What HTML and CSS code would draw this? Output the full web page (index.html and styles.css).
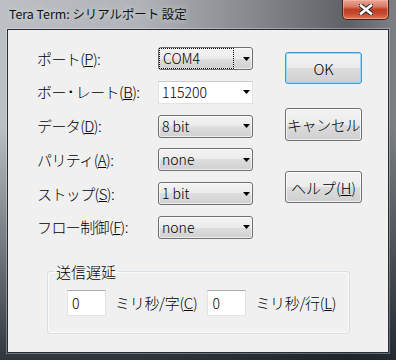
FILE: index.html
```html
<!DOCTYPE html>
<html lang="ja">
<head>
    <meta charset="UTF-8">
    <title>Tera Term: シリアルポート 設定</title>
    <link rel="stylesheet" href="styles.css">
</head>
<body>
    <div class="window">
        <div class="titlebar">
            <span class="title">Tera Term: シリアルポート 設定</span>
            <button class="close" title="閉じる">
                <svg width="14" height="11" viewBox="0 0 14 11">
                    <path d="M2 1.5 L12 9.5 M12 1.5 L2 9.5" stroke="#2a2a2a" stroke-width="4.6" stroke-linecap="square"/>
                    <path d="M2 1.5 L12 9.5 M12 1.5 L2 9.5" stroke="#ffffff" stroke-width="2.6" stroke-linecap="square"/>
                </svg>
            </button>
        </div>

        <div class="client">
            <div class="top">
                <div class="fields">
                    <label>ポート(<u>P</u>):</label>
                    <div class="combo">
                        <span class="value focus">COM4</span>
                        <svg class="arrow" width="7" height="4" viewBox="0 0 7 4"><path d="M0 0 H7 L3.5 4 Z" fill="#000"/></svg>
                    </div>

                    <label>ボー<span class="dot">・</span>レート(<u>B</u>):</label>
                    <div class="combo edit">
                        <span class="value">115200</span>
                        <svg class="arrow" width="7" height="4" viewBox="0 0 7 4"><path d="M0 0 H7 L3.5 4 Z" fill="#000"/></svg>
                    </div>

                    <label>データ(<u>D</u>):</label>
                    <div class="combo">
                        <span class="value">8 bit</span>
                        <svg class="arrow" width="7" height="4" viewBox="0 0 7 4"><path d="M0 0 H7 L3.5 4 Z" fill="#000"/></svg>
                    </div>

                    <label>パリティ(<u>A</u>):</label>
                    <div class="combo">
                        <span class="value">none</span>
                        <svg class="arrow" width="7" height="4" viewBox="0 0 7 4"><path d="M0 0 H7 L3.5 4 Z" fill="#000"/></svg>
                    </div>

                    <label>ストップ(<u>S</u>):</label>
                    <div class="combo">
                        <span class="value">1 bit</span>
                        <svg class="arrow" width="7" height="4" viewBox="0 0 7 4"><path d="M0 0 H7 L3.5 4 Z" fill="#000"/></svg>
                    </div>

                    <label>フロー制御(<u>F</u>):</label>
                    <div class="combo">
                        <span class="value">none</span>
                        <svg class="arrow" width="7" height="4" viewBox="0 0 7 4"><path d="M0 0 H7 L3.5 4 Z" fill="#000"/></svg>
                    </div>
                </div>

                <div class="buttons">
                    <button class="btn default">OK</button>
                    <button class="btn cancel">キャンセル</button>
                    <button class="btn help">ヘルプ(<u>H</u>)</button>
                </div>
            </div>

            <!-- 送信遅延 -->
            <fieldset class="delay">
                <legend>送信遅延</legend>
                <div class="delay-row">
                    <input class="num" type="text" value="0">
                    <span class="unit">ミリ秒/字(<u>C</u>)</span>
                    <input class="num" type="text" value="0">
                    <span class="unit">ミリ秒/行(<u>L</u>)</span>
                </div>
            </fieldset>
        </div>
    </div>
</body>
</html>
```

FILE: styles.css
```css
/* General */
* {
    margin: 0;
    padding: 0;
    box-sizing: border-box;
}
html, body {
    width: 396px;
    height: 360px;
    overflow: hidden;
    background: #5d6268;
    font-family: "Noto Sans CJK JP", "Noto Sans", sans-serif;
    font-weight: 300;
    color: #000;
}

/* Window frame (Aero glass) */
.window {
    width: 396px;
    height: 360px;
    padding: 0 7px 7px 7px;
    display: flex;
    flex-direction: column;
    background:
        linear-gradient(to bottom, rgba(0, 0, 0, 0) 0, rgba(0, 0, 0, 0) 35%, rgba(12, 20, 28, 0.8) 100%),
        linear-gradient(to right, #bcc0c4 0, #b0b4b8 35%, #83878c 65%, #5e6267 88%, #7d8186 100%);
}

.titlebar {
    height: 29px;
    display: flex;
    align-items: flex-start;
    padding-left: 2px;
}
.title {
    font-size: 12.4px;
    font-weight: 400;
    line-height: 16px;
    padding-top: 6px;
    color: #101010;
    text-shadow: 0 0 6px rgba(255, 255, 255, 0.7);
}
.close {
    margin-left: auto;
    width: 47px;
    height: 20px;
    border: 1px solid #4a2119;
    border-top: none;
    border-radius: 0 0 5px 5px;
    background: linear-gradient(to bottom, #e9a796 0, #d77a63 35%, #bf3e25 50%, #c4472d 70%, #e07a55 100%);
    box-shadow: inset 0 0 0 1px rgba(255, 190, 170, 0.5);
    display: flex;
    align-items: center;
    justify-content: center;
}

/* Client area */
.client {
    flex: 1;
    background: #f0f0f0;
    border: 1px solid #262c33;
    box-shadow: 0 0 0 1px rgba(255, 255, 255, 0.3);
    padding: 17px 0 0 29px;
}

.top {
    display: flex;
    gap: 32px;
}

.fields {
    display: grid;
    grid-template-columns: 121px 95px;
    grid-auto-rows: 23px;
    row-gap: 10.8px;
    align-items: center;
}
.fields label {
    font-size: 15px;
    line-height: 18px;
    letter-spacing: -0.6px;
    white-space: nowrap;
}
.fields label .dot {
    font-size: 10px;
    font-weight: 700;
    letter-spacing: 0;
    vertical-align: 2px;
}

/* Combo boxes */
.combo {
    height: 23px;
    display: flex;
    align-items: center;
    border: 1px solid #707070;
    border-radius: 3px;
    background: linear-gradient(to bottom, #f3f3f3 0, #ebebeb 50%, #dedede 50%, #d0d0d0 100%);
    box-shadow: inset 0 0 0 1px rgba(255, 255, 255, 0.6);
}
.combo.edit {
    background: #fff;
    border-color: #dfe2e6;
    border-top-color: #c8cbcf;
    border-radius: 0;
    box-shadow: none;
}
.combo .value {
    flex: 1;
    font-size: 14px;
    line-height: 21px;
    padding-left: 3px;
}
.combo .value.focus {
    flex: 0 0 75px;
    height: 21px;
    padding-left: 4px;
    outline: 1px dotted #000;
    outline-offset: -1px;
}
.combo .arrow {
    margin-left: auto;
    margin-right: 2px;
}

/* Buttons */
.buttons {
    display: flex;
    flex-direction: column;
    padding-top: 5px;
}
.btn {
    width: 77px;
    height: 32px;
    padding: 0;
    font-family: inherit;
    font-weight: 300;
    font-size: 15px;
    color: #000;
    white-space: nowrap;
    border: 1px solid #707070;
    border-radius: 3px;
    background: linear-gradient(to bottom, #f3f3f3 0, #ebebeb 50%, #dddddd 50%, #cfcfcf 100%);
    box-shadow: inset 0 0 0 1px rgba(255, 255, 255, 0.7);
}
.btn.default {
    border-color: #3d9ad6;
    box-shadow: inset 0 0 0 1px #98d8f6;
}
.btn.cancel {
    margin-top: 24px;
    height: 33px;
    letter-spacing: -0.4px;
}
.btn.help {
    margin-top: 30px;
}

/* Group box */
.delay {
    width: 303px;
    margin: 24px 0 0 10px;
    border: 1px solid #d5dfe5;
    border-radius: 3px;
    box-shadow: inset 0 0 0 1px #fafafa;
    padding: 9px 0 17px 6px;
}
.delay legend {
    font-size: 15px;
    line-height: 18px;
    padding: 0 2px;
}
.delay-row {
    display: flex;
    align-items: center;
    padding-left: 13px;
}
.num {
    width: 39px;
    height: 26px;
    border: 1px solid #e2e3ea;
    border-top-color: #abadb3;
    background: #fff;
    font-family: inherit;
    font-weight: 300;
    font-size: 14px;
    padding-left: 4px;
    color: #000;
}
.unit {
    font-size: 15px;
    line-height: 18px;
    letter-spacing: -0.3px;
    margin: 0 10px 0 9px;
    white-space: nowrap;
}
.unit:last-child {
    margin-right: 0;
}
```
